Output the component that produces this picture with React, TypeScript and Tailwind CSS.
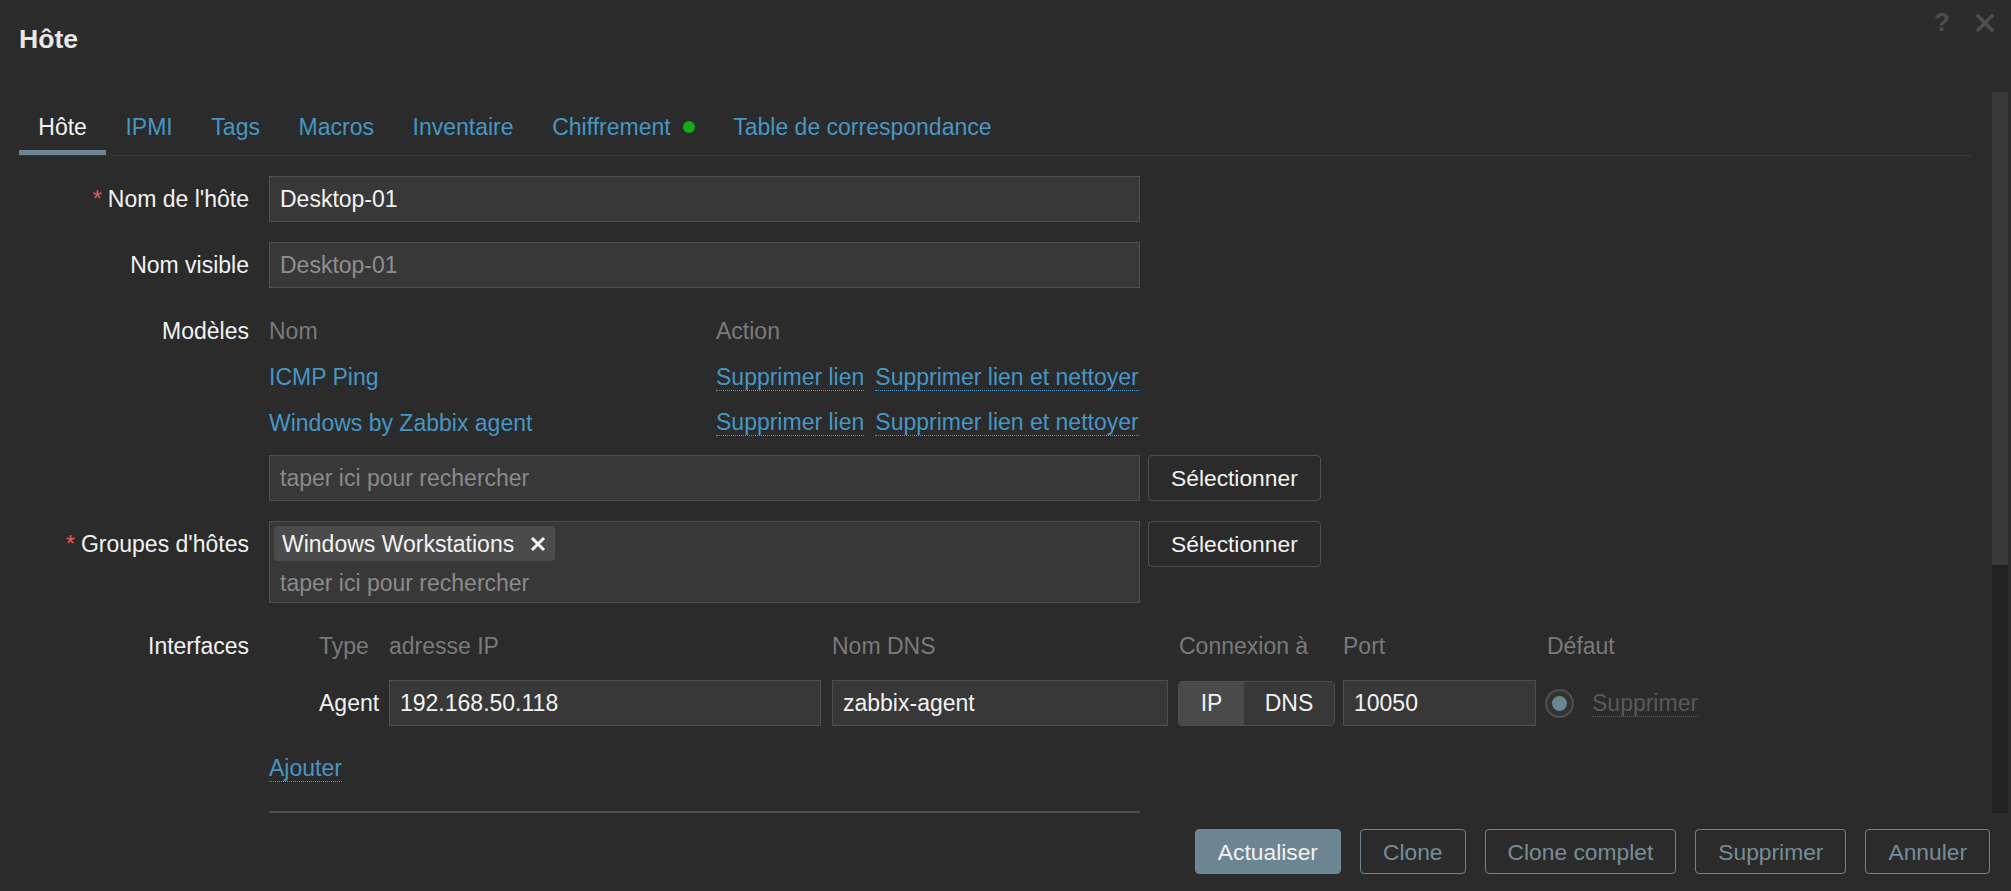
import React from "react";

const tabs = ["Hôte", "IPMI", "Tags", "Macros", "Inventaire", "Chiffrement", "Table de correspondance"];

const templates = ["ICMP Ping", "Windows by Zabbix agent"];

const footerButtons = ["Clone", "Clone complet", "Supprimer", "Annuler"];

function FormRow({ label, required, children }: { label: string; required?: boolean; children: React.ReactNode }) {
  return (
    <div className="flex items-start">
      <div className="w-[230px] h-[46px] shrink-0 flex items-center justify-end text-[#f2f2f2]">
        {required && <span className="text-[#e45959] mr-[6px]">*</span>}
        {label}
      </div>
      <div className="ml-[20px]">{children}</div>
    </div>
  );
}

function ActionLink({ children, className = "" }: { children: React.ReactNode; className?: string }) {
  return (
    <span className={`inline-block leading-[26px] text-[#4796c4] border-b border-dotted border-[#4796c4] ${className}`}>
      {children}
    </span>
  );
}

function SelectButton() {
  return (
    <div className="h-[46px] px-[22px] flex items-center bg-[#2b2b2b] border border-[#4f4f4f] rounded-[4px] text-[#f2f2f2] text-[22.8px]">
      Sélectionner
    </div>
  );
}

export default function App() {
  return (
    <div className="w-[2011px] h-[891px] overflow-hidden bg-[#2b2b2b] text-[#f2f2f2] text-[23px] leading-[26px] font-['Liberation_Sans',Arial,sans-serif] flex flex-col">
      {/* header */}
      <div className="h-[92px] shrink-0 flex items-start justify-between pl-[19px] pr-[17px]">
        <h4 className="pt-[24px] text-[26.6px] leading-[30px] font-bold text-[#e8e8e8]">Hôte</h4>
        <div className="flex items-center gap-[26px] pt-[7px]">
          <span className="text-[26px] leading-[30px] font-bold text-[#4d4d4d]">?</span>
          <svg width="18" height="18" viewBox="0 0 18 18" className="mt-[1px]">
            <path d="M2 2 L16 16 M16 2 L2 16" stroke="#4d4d4d" strokeWidth="3.6" strokeLinecap="square" />
          </svg>
        </div>
      </div>

      {/* body + scrollbar */}
      <div className="h-[721px] shrink-0 flex">
        <div className="w-[1992px] h-full overflow-hidden pl-[19px] pr-[20px]">
          {/* tabs */}
          <div className="pt-[22px] flex border-b border-[#383838]">
            {tabs.map((t, i) => (
              <div
                key={t}
                className={`px-[19.3px] pb-[10px] border-b-[5px] flex items-center ${
                  i === 0 ? "border-[#6d8593] text-[#f2f2f2]" : "border-transparent text-[#4796c4]"
                }`}
              >
                {t}
                {t === "Chiffrement" && <span className="ml-[12px] w-[12px] h-[12px] rounded-full bg-[#15a915]" />}
              </div>
            ))}
          </div>

          <div className="mt-[20px] flex flex-col gap-[20px]">
            <FormRow label="Nom de l'hôte" required>
              <div className="w-[871px] h-[46px] px-[10px] flex items-center bg-[#383838] border border-[#4f4f4f]">Desktop-01</div>
            </FormRow>

            <FormRow label="Nom visible">
              <div className="w-[871px] h-[46px] px-[10px] flex items-center bg-[#383838] border border-[#4f4f4f] text-[#8f8f8f]">
                Desktop-01
              </div>
            </FormRow>

            <FormRow label="Modèles">
              <div className="w-[871px]">
                <div className="h-[46px] flex items-center text-[#7a7a7a]">
                  <div className="w-[447px]">Nom</div>
                  <div>Action</div>
                </div>
                {templates.map((t, i) => (
                  <div key={t} className={`${i === 0 ? "h-[46px]" : "h-[45px]"} flex items-center`}>
                    <div className="w-[447px] text-[#4796c4]">{t}</div>
                    <ActionLink>Supprimer lien</ActionLink>
                    <ActionLink className="ml-[11px]">Supprimer lien et nettoyer</ActionLink>
                  </div>
                ))}
                <div className="mt-[10px] flex gap-[8px]">
                  <div className="w-[871px] shrink-0 h-[46px] px-[10px] flex items-center bg-[#383838] border border-[#4f4f4f] text-[#8a8a8a]">
                    taper ici pour rechercher
                  </div>
                  <SelectButton />
                </div>
              </div>
            </FormRow>

            <FormRow label="Groupes d'hôtes" required>
              <div className="flex gap-[8px]">
                <div className="w-[871px] h-[82px] shrink-0 p-[4px] bg-[#383838] border border-[#4f4f4f]">
                  <div className="inline-flex items-center h-[35px] pl-[8px] pr-[9px] rounded-[4px] bg-[#4b4b4b] text-[#f2f2f2]">
                    Windows Workstations
                    <svg width="16" height="16" viewBox="0 0 16 16" className="ml-[16px]">
                      <path d="M3 3 L13 13 M13 3 L3 13" stroke="#f2f2f2" strokeWidth="3" strokeLinecap="square" />
                    </svg>
                  </div>
                  <div className="mt-[9px] pl-[6px] text-[#8a8a8a]">taper ici pour rechercher</div>
                </div>
                <SelectButton />
              </div>
            </FormRow>

            <FormRow label="Interfaces">
              <div>
                <div className="pl-[50px] h-[46px] flex items-center text-[#7a7a7a]">
                  <div className="w-[70px]">Type</div>
                  <div className="w-[443px]">adresse IP</div>
                  <div className="w-[347px]">Nom DNS</div>
                  <div className="w-[164px]">Connexion à</div>
                  <div className="w-[204px]">Port</div>
                  <div>Défaut</div>
                </div>
                <div className="pl-[50px] mt-[11px] h-[46px] flex items-center">
                  <div className="w-[61px]">Agent</div>
                  <div className="ml-[9px] w-[432px] h-[46px] px-[10px] flex items-center bg-[#383838] border border-[#4f4f4f]">
                    192.168.50.118
                  </div>
                  <div className="ml-[11px] w-[336px] h-[46px] px-[10px] flex items-center bg-[#383838] border border-[#4f4f4f]">
                    zabbix-agent
                  </div>
                  <div className="ml-[10px] w-[157px] h-[45px] flex border border-[#4f4f4f] rounded-[4px] overflow-hidden">
                    <div className="w-[65px] flex items-center justify-center bg-[#4a4a4a]">IP</div>
                    <div className="flex-1 flex items-center justify-center bg-[#383838]">DNS</div>
                  </div>
                  <div className="ml-[8px] w-[193px] h-[46px] px-[10px] flex items-center bg-[#383838] border border-[#4f4f4f]">
                    10050
                  </div>
                  <div className="ml-[9px] w-[29px] h-[29px] rounded-full border-2 border-[#4f4f4f] bg-[#333333] flex items-center justify-center">
                    <div className="w-[15px] h-[15px] rounded-full bg-[#6d8593]" />
                  </div>
                  <span className="ml-[18px] inline-block leading-[26px] text-[#595959] border-b border-dotted border-[#595959]">
                    Supprimer
                  </span>
                </div>
                <div className="mt-[29px]">
                  <ActionLink>Ajouter</ActionLink>
                </div>
              </div>
            </FormRow>

            <div className="ml-[250px] mt-[9px] w-[871px] h-[80px] border-t-[3px] border-x border-[#4f4f4f] bg-[#383838]" />
          </div>
        </div>

        {/* scrollbar */}
        <div className="w-[16px] h-full flex flex-col">
          <div className="h-[473px] bg-[#393939]" />
          <div className="flex-1 bg-[#222222]" />
        </div>
      </div>

      {/* footer */}
      <div className="flex-1 flex justify-end items-start gap-[19px] pt-[16px] pr-[21px] text-[22.8px]">
        <div className="h-[45px] px-[22px] flex items-center rounded-[4px] bg-[#6d8593] border border-[#6d8593] text-[#f2f2f2]">
          Actualiser
        </div>
        {footerButtons.map((b) => (
          <div key={b} className="h-[45px] px-[22px] flex items-center rounded-[4px] border border-[#6d8593] text-[#768d99]">
            {b}
          </div>
        ))}
      </div>
    </div>
  );
}
